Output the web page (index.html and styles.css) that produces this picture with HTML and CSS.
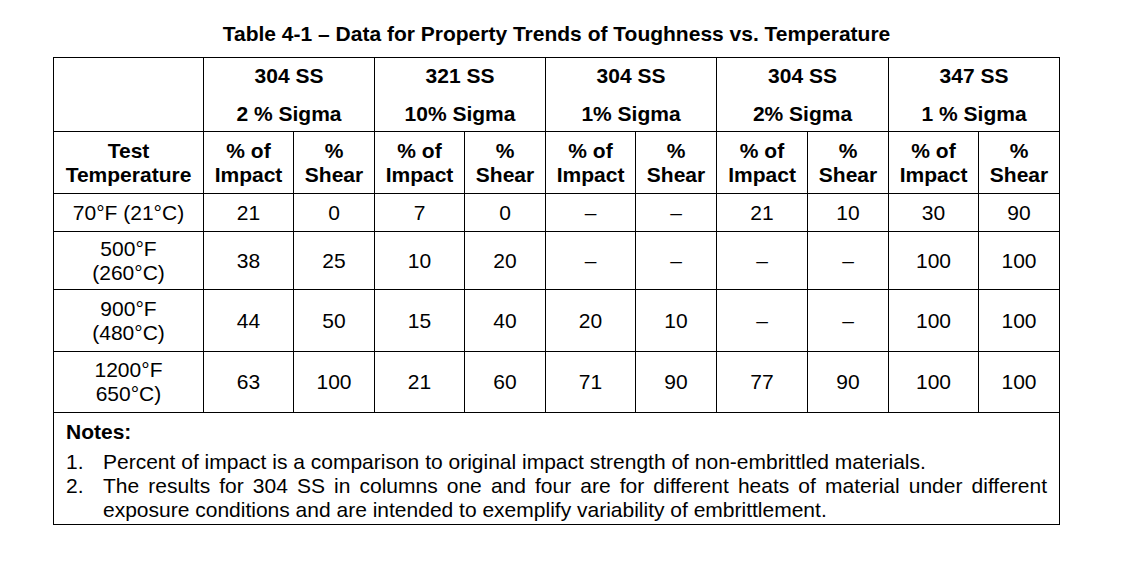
FILE: index.html
```html
<!DOCTYPE html>
<html lang="en">
<head>
<meta charset="utf-8">
<title>Table 4-1</title>
<link rel="stylesheet" href="styles.css">
</head>
<body>
<div class="page">
  <div class="title">Table 4-1 – Data for Property Trends of Toughness vs. Temperature</div>
  <table class="data">
    <colgroup>
      <col class="c-temp">
      <col class="c-imp"><col class="c-shr">
      <col class="c-imp"><col class="c-shr">
      <col class="c-imp"><col class="c-shr">
      <col class="c-imp2"><col class="c-shr">
      <col class="c-imp"><col class="c-shr">
    </colgroup>
    <tr class="r-group">
      <th></th>
      <th colspan="2"><div>304 SS</div><div class="sub">2 % Sigma</div></th>
      <th colspan="2"><div>321 SS</div><div class="sub">10% Sigma</div></th>
      <th colspan="2"><div>304 SS</div><div class="sub">1% Sigma</div></th>
      <th colspan="2"><div>304 SS</div><div class="sub">2% Sigma</div></th>
      <th colspan="2"><div>347 SS</div><div class="sub">1 % Sigma</div></th>
    </tr>
    <tr class="r-head">
      <th>Test<br>Temperature</th>
      <th>% of<br>Impact</th><th>%<br>Shear</th>
      <th>% of<br>Impact</th><th>%<br>Shear</th>
      <th>% of<br>Impact</th><th>%<br>Shear</th>
      <th>% of<br>Impact</th><th>%<br>Shear</th>
      <th>% of<br>Impact</th><th>%<br>Shear</th>
    </tr>
    <tr class="r-1">
      <td>70°F (21°C)</td>
      <td>21</td><td>0</td><td>7</td><td>0</td><td>–</td><td>–</td><td>21</td><td>10</td><td>30</td><td>90</td>
    </tr>
    <tr class="r-2">
      <td>500°F<br>(260°C)</td>
      <td>38</td><td>25</td><td>10</td><td>20</td><td>–</td><td>–</td><td>–</td><td>–</td><td>100</td><td>100</td>
    </tr>
    <tr class="r-3">
      <td>900°F<br>(480°C)</td>
      <td>44</td><td>50</td><td>15</td><td>40</td><td>20</td><td>10</td><td>–</td><td>–</td><td>100</td><td>100</td>
    </tr>
    <tr class="r-4">
      <td>1200°F<br>650°C)</td>
      <td>63</td><td>100</td><td>21</td><td>60</td><td>71</td><td>90</td><td>77</td><td>90</td><td>100</td><td>100</td>
    </tr>
    <tr class="r-notes">
      <td colspan="11" class="notes">
        <div class="notes-title">Notes:</div>
        <ol class="notes-list">
          <li><span class="num">1.</span><span class="txt">Percent of impact is a comparison to original impact strength of non-embrittled materials.</span></li>
          <li><span class="num">2.</span><span class="txt">The results for 304 SS in columns one and four are for different heats of material under different exposure conditions and are intended to exemplify variability of embrittlement.</span></li>
        </ol>
      </td>
    </tr>
  </table>
</div>
</body>
</html>
```
FILE: styles.css
```css
html, body {
  margin: 0;
  padding: 0;
  background: #ffffff;
}
body {
  font-family: "Liberation Sans", Arial, sans-serif;
  font-size: 21px;
  line-height: 24px;
  color: #000000;
}
.page {
  padding-left: 53px;
  width: 1007px;
}
.title {
  padding-top: 22px;
  margin-bottom: 11px;
  text-align: center;
  font-family: "Liberation Sans Narrow", "Arial Narrow", "Liberation Sans", sans-serif;
  font-weight: bold;
  font-size: 21px;
  line-height: 24px;
}
.data {
  border-collapse: collapse;
  table-layout: fixed;
  width: 1007px;
}
.c-temp { width: 150px; }
.c-imp { width: 90px; }
.c-imp2 { width: 91px; }
.c-shr { width: 81px; }
.data th,
.data td {
  border: 1px solid #000000;
  padding: 0;
  text-align: center;
  vertical-align: middle;
}
.data th {
  font-weight: bold;
}
.r-group { height: 74px; }
.r-group .sub { margin-top: 14px; }
.r-head { height: 62px; }
.r-1 { height: 38px; }
.r-2 { height: 58px; }
.r-3 { height: 62px; }
.r-4 { height: 61px; }
.data td.notes {
  text-align: left;
  vertical-align: top;
  padding: 7px 12px 0 12px;
  height: 104px;
}
.notes-title {
  font-weight: bold;
  margin-bottom: 6px;
}
.notes-list {
  list-style: none;
  margin: 0;
  padding: 0;
}
.notes-list li {
  display: flex;
}
.notes-list .num {
  flex: 0 0 37px;
}
.notes-list .txt {
  flex: 1 1 auto;
  text-align: justify;
}
```
